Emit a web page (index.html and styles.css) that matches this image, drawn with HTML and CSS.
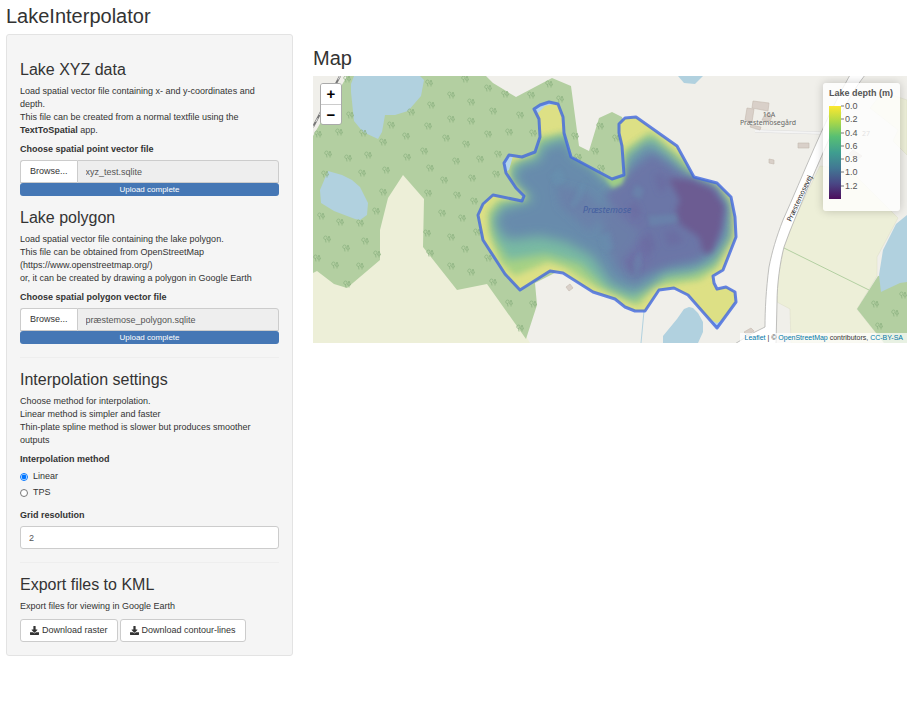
FILE: index.html
```html
<!DOCTYPE html>
<html lang="en">
<head>
<meta charset="utf-8">
<title>LakeInterpolator</title>
<link rel="stylesheet" href="styles.css">
</head>
<body>
<div class="container">
  <h2>LakeInterpolator</h2>
  <div class="row">
    <div class="col-side">
      <form class="well">
        <h3>Lake XYZ data</h3>
        <p>Load spatial vector file containing x- and y-coordinates and depth.<br>This file can be created from a normal textfile using the <b>TextToSpatial</b> app.</p>
        <label class="control-label" for="xyz">Choose spatial point vector file</label>
        <div class="input-group">
          <label class="btn btn-file">Browse...<input class="file" id="xyz" type="file"></label>
          <input class="form-control" type="text" value="xyz_test.sqlite" aria-label="Point file name" readonly>
        </div>
        <div class="progress">Upload complete</div>

        <h3>Lake polygon</h3>
        <p>Load spatial vector file containing the lake polygon.<br>This file can be obtained from OpenStreetMap (https://www.openstreetmap.org/)<br>or, it can be created by drawing a polygon in Google Earth</p>
        <label class="control-label" for="poly">Choose spatial polygon vector file</label>
        <div class="input-group">
          <label class="btn btn-file">Browse...<input class="file" id="poly" type="file"></label>
          <input class="form-control" type="text" value="præstemose_polygon.sqlite" aria-label="Polygon file name" readonly>
        </div>
        <div class="progress">Upload complete</div>
        <hr>

        <h3>Interpolation settings</h3>
        <p>Choose method for interpolation.<br>Linear method is simpler and faster<br>Thin-plate spline method is slower but produces smoother outputs</p>
        <fieldset>
          <legend class="control-label">Interpolation method</legend>
          <label class="radio"><input type="radio" name="method" checked>Linear</label>
          <label class="radio"><input type="radio" name="method">TPS</label>
        </fieldset>
        <label class="control-label" for="grid">Grid resolution</label>
        <input class="form-control" id="grid" type="text" inputmode="numeric" value="2">
        <hr>

        <h3>Export files to KML</h3>
        <p>Export files for viewing in Google Earth</p>
        <div class="buttons">
          <button class="btn" type="button"><svg class="icon" viewBox="0 0 512 512" aria-hidden="true"><path d="M216 0h80c13 0 24 11 24 24v168h88c18 0 27 21 14 34L270 378c-7 7-20 7-28 0L90 226c-13-13-4-34 14-34h88V24c0-13 11-24 24-24zm296 376v112c0 13-11 24-24 24H24c-13 0-24-11-24-24V376c0-13 11-24 24-24h147l49 49c20 20 52 20 72 0l49-49h147c13 0 24 11 24 24z"/></svg>Download raster</button>
          <button class="btn" type="button"><svg class="icon" viewBox="0 0 512 512" aria-hidden="true"><path d="M216 0h80c13 0 24 11 24 24v168h88c18 0 27 21 14 34L270 378c-7 7-20 7-28 0L90 226c-13-13-4-34 14-34h88V24c0-13 11-24 24-24zm296 376v112c0 13-11 24-24 24H24c-13 0-24-11-24-24V376c0-13 11-24 24-24h147l49 49c20 20 52 20 72 0l49-49h147c13 0 24 11 24 24z"/></svg>Download contour-lines</button>
        </div>
      </form>
    </div>

    <main class="col-main">
      <h2>Map</h2>
      <div class="map">
        <svg class="tiles" viewBox="313 76 594 267" preserveAspectRatio="xMidYMid slice" role="img" aria-label="Lake depth map of Præstemose">
          <defs>
            <g id="t" fill="none" stroke="#8db282" stroke-width="0.8">
              <path d="M-1 3.500L-1.500 0.500C-4 0.500-3.500-3-1.500-3S0.500 0-1.500 0.500M2 3.500V1L0.500 1L2-3L3.500 1H2"/>
            </g>
            <path id="shore" d="M534 109L540 105L549 102L558 104L563 117L564 133L571 157L612 179L624 175L622 146L619 133L619 124L625 118L636 117L677 146L694 177L717 183L731 197L735 217L736 237L723 270L713 276L714 283L717 289L726 287L735 292L736 302L717 328L688 295L674 288L659 290L645 311L635 311L625 307L615 299L593 292L563 273L550 271L520 290L505 274L483 240L478 215L483 204L493 195L522 201L524 196L516 188L506 173L504 163L509 155L522 157L535 152L540 137L539 119Z"/>
            <clipPath id="lake"><use href="#shore"/></clipPath>
            <filter id="b2" x="-20%" y="-20%" width="140%" height="140%"><feGaussianBlur stdDeviation="2"/></filter>
            <filter id="b3" x="-20%" y="-20%" width="140%" height="140%"><feGaussianBlur stdDeviation="3"/></filter>
            <filter id="b4" x="-20%" y="-20%" width="140%" height="140%"><feGaussianBlur stdDeviation="4"/></filter>
            <filter id="b6" x="-20%" y="-20%" width="140%" height="140%"><feGaussianBlur stdDeviation="6"/></filter>
          </defs>

          <rect x="213" y="-24" width="794" height="467" fill="#f0efea"/>

          <!-- fields -->
          <path fill="#edefd8" d="M313 260H370V170H430L530 343H313Z"/>
          <path fill="#edefd8" stroke="#dcdcc6" stroke-width="0.5" d="M820 166L850 170L880 200L898 218L877 257V276L857 309L884 343H791L790 309L777 302L778 277L784 247L794 220Z"/>
          <path fill="#edefd8" stroke="#dcdcc6" stroke-width="0.5" d="M883 92L907 100V155L893 141L898 130L870 108Z"/>

          <!-- woodland -->
          <path fill="#b3cfa1" d="M347 76H486L493 83L516 97L552 78L571 86L579 146L589 151L599 118L612 112L622 117L640 170L600 250L535 283L537 305L526 339L487 284L457 290L423 247L424 199L403 175L388 198L380 230V260L347 288L334 284L317 271L313 273V136Z"/>
          <path fill="#b3cfa1" d="M878 276L857 309L884 343H907V270Z"/>
          <path stroke="#b3cfa1" fill="none" d="M784 248L869 290"/>

          <!-- water -->
          <g fill="#b1d1df">
            <path d="M354 76L351 84V92L354 121L363 132L378 139L382 132L385 115H395L408 111L421 96L424 80L420 76Z"/>
            <path d="M328 171L320 190L321 203L334 211L355 219L360 220L367 215L368 203L360 187L352 180L342 175Z"/>
            <path d="M678 76L684 83L695 84L703 76Z"/>
            <path d="M689 307L684 309L677 319L663 336V343H698L703 332V322L698 313L693 308Z"/>
            <path d="M907 215L896 224L883 250L879 275L881 292L885 290L900 283L907 282Z"/>
          </g>
          <path d="M644 311L641 343" stroke="#b1d1df" fill="none"/>

          <g>
            <use href="#t" x="347" y="79"/><use href="#t" x="429" y="83"/><use href="#t" x="451" y="95"/><use href="#t" x="471" y="102"/><use href="#t" x="488" y="88"/><use href="#t" x="505" y="94"/><use href="#t" x="465" y="79"/><use href="#t" x="431" y="105"/><use href="#t" x="411" y="112"/><use href="#t" x="350" y="115"/><use href="#t" x="391" y="125"/><use href="#t" x="451" y="119"/><use href="#t" x="471" y="121"/><use href="#t" x="493" y="111"/><use href="#t" x="428" y="126"/><use href="#t" x="488" y="134"/><use href="#t" x="509" y="132"/><use href="#t" x="318" y="134"/><use href="#t" x="339" y="132"/><use href="#t" x="363" y="133"/><use href="#t" x="406" y="136"/><use href="#t" x="446" y="138"/><use href="#t" x="466" y="144"/><use href="#t" x="383" y="142"/><use href="#t" x="328" y="154"/><use href="#t" x="348" y="158"/><use href="#t" x="368" y="155"/><use href="#t" x="407" y="157"/><use href="#t" x="424" y="151"/><use href="#t" x="456" y="161"/><use href="#t" x="480" y="159"/><use href="#t" x="498" y="154"/><use href="#t" x="325" y="174"/><use href="#t" x="362" y="173"/><use href="#t" x="386" y="170"/><use href="#t" x="430" y="168"/><use href="#t" x="444" y="180"/><use href="#t" x="472" y="178"/><use href="#t" x="496" y="174"/><use href="#t" x="383" y="192"/><use href="#t" x="428" y="193"/><use href="#t" x="457" y="195"/>
            <use href="#t" x="474" y="201"/><use href="#t" x="442" y="213"/><use href="#t" x="462" y="218"/><use href="#t" x="477" y="232"/><use href="#t" x="427" y="233"/><use href="#t" x="451" y="237"/><use href="#t" x="465" y="249"/><use href="#t" x="488" y="258"/><use href="#t" x="430" y="253"/><use href="#t" x="451" y="266"/><use href="#t" x="471" y="272"/><use href="#t" x="493" y="282"/><use href="#t" x="509" y="303"/><use href="#t" x="321" y="216"/><use href="#t" x="340" y="222"/><use href="#t" x="360" y="223"/><use href="#t" x="376" y="211"/><use href="#t" x="327" y="239"/><use href="#t" x="346" y="248"/><use href="#t" x="365" y="241"/><use href="#t" x="317" y="258"/><use href="#t" x="335" y="265"/><use href="#t" x="360" y="266"/><use href="#t" x="377" y="254"/><use href="#t" x="347" y="284"/>
            <use href="#t" x="549" y="84"/><use href="#t" x="531" y="95"/><use href="#t" x="560" y="99"/><use href="#t" x="520" y="115"/><use href="#t" x="533" y="133"/><use href="#t" x="575" y="136"/><use href="#t" x="600" y="126"/><use href="#t" x="595" y="151"/><use href="#t" x="578" y="157"/><use href="#t" x="601" y="168"/><use href="#t" x="616" y="138"/><use href="#t" x="533" y="304"/><use href="#t" x="520" y="328"/>
            <use href="#t" x="875" y="304"/><use href="#t" x="895" y="313"/><use href="#t" x="879" y="326"/><use href="#t" x="903" y="295"/>
          </g>

          <!-- railway, track and roads -->
          <path d="M340 76L313 127" stroke="#777" stroke-width="2" fill="none"/>
          <path d="M340 76L313 127" stroke="#e6e6e6" stroke-dasharray="4 4" fill="none"/>
          <path d="M755 131L822 133" stroke="#dcdcdc" stroke-width="3" fill="none"/>
          <path d="M755 131L822 133" stroke="#f4f4f4" stroke-width="2" fill="none"/>
          <path fill="#fff" stroke="#b0b0ad" stroke-width="0.8" d="M850 75C825 118 802 178 783 220C776 238 772 252 769 267C766 290 765 310 765 327L753 333L733 345H776L777 302C777 285 780 262 784 247C791 227 800 207 809 185C829 140 842 105 865 75Z"/>

          <g fill="#d9d0c9" stroke="#c4b8ae" stroke-width="0.6">
            <path d="M753 101L769 103L768 111L752 108Z"/><path d="M747 108L754 109L752 122L745 120Z"/><path d="M765 114L772 117L770 121L762 120Z"/><path d="M751 125L761 127L760 130L750 127Z"/>
            <path d="M769 159L774 160V164L769 163Z"/><path d="M798 143H809V148H798Z"/><path d="M570 284L573 288L569 291L566 287Z"/><path d="M744 332L751 328L754 331L747 335Z"/><path d="M853 150L862 156L857 160L849 154Z"/>
          </g>

          <g class="place" text-anchor="middle">
            <text x="769" y="117">16A</text>
            <text x="768" y="125">Præstemosegård</text>
            <text x="866" y="136">27</text>
          </g>
          <text class="street" transform="translate(791 222) rotate(-65)">Præstemosevej</text>

          <!-- interpolated depth -->
          <g clip-path="url(#lake)">
            <rect x="470" y="95" width="275" height="240" fill="#dde085"/>
            <g filter="url(#b3)">
              <path fill="#a6d184" d="M538 138L566 132L572 154L612 182L626 175L624 150L650 132L682 158L694 176L716 186L729 202L731 238L716 268L700 280L670 284L655 286L638 306L618 296L594 286L564 267L548 262L515 276L500 262L489 232L488 212L498 200L526 202L526 195L512 180L510 164L522 159L536 155Z"/>
            </g>
            <g filter="url(#b4)">
              <path fill="#78b9a3" d="M540 143L566 136L574 154L604 180L628 178L626 156L652 137L690 175L714 186L729 204L730 236L714 264L692 274L664 278L650 286L634 300L604 286L580 264L546 254L508 260L496 240L492 217L504 203L530 203L528 192L511 178L512 166L536 157Z"/>
            </g>
            <g filter="url(#b6)">
              <path fill="#688bac" d="M542 148L566 140L572 154L596 170L612 188L622 184L628 160L648 143L668 156L684 172L716 186L729 205L729 235L714 258L696 268L664 272L650 284L634 292L612 284L592 256L566 242L540 236L508 240L496 226L500 210L534 200L514 180L518 166L540 160Z"/>
            </g>
            <g filter="url(#b4)" fill="#6e6fa6">
              <path d="M634 168L652 154L690 178L716 188L726 210L720 238L698 260L668 266L640 276L622 262L634 246L642 232L620 216L604 196Z" opacity=".75"/>
              <path d="M600 206L640 220L650 262L636 284L616 268L604 236Z" opacity=".5"/>
              <path d="M556 184L590 194L604 214L590 232L560 206Z" opacity=".35"/>
            </g>
            <g filter="url(#b3)">
              <path fill="#6c5b92" d="M668 178L690 180L712 189L724 206L721 228L712 252L704 254L699 237L680 224L676 210L680 200Z"/>
              <g fill="#6b5f9a" opacity=".35">
                <path d="M654 176L662 172L668 186L660 194Z"/><path d="M640 240L650 232L656 246L646 258Z"/><path d="M664 232L676 230L684 242L668 246Z"/><path d="M628 206L636 202L642 212L634 220Z"/><path d="M626 262L634 258L640 270L630 274Z"/>
              </g>
            </g>
            <g filter="url(#b2)" fill="#6797b2" opacity=".35">
              <path d="M570 206L580 186L586 180L582 198L574 208Z"/><path d="M648 216L676 214L678 222L650 226Z"/><path d="M550 176L560 168L566 180L556 186Z"/><path d="M636 184L644 190L640 200L632 194Z"/><path d="M600 238L610 230L614 248L606 252Z"/><path d="M632 264L640 250L642 266L636 276Z"/>
            </g>
            <path filter="url(#b2)" fill="#9fce86" d="M606 178L612 188L622 184L626 172L612 176Z"/>
            <path fill="#b5d5ea" d="M534 109L549 101L558 103L545 106L538 113ZM504 158L513 156L509 170L505 172ZM711 320L717 323L723 320L717 330Z"/>
          </g>
          <text class="water" x="607" y="213" text-anchor="middle">Præstemose</text>
          <use href="#shore" fill="none" stroke="#4067e0" stroke-opacity=".8" stroke-width="3" stroke-linejoin="round"/>
        </svg>

        <div class="zoom-control">
          <button type="button" aria-label="Zoom in">+</button>
          <button type="button" aria-label="Zoom out">−</button>
        </div>

        <div class="legend">
          <strong>Lake depth (m)</strong>
          <svg class="scale" width="40" height="100" viewBox="0 0 40 100">
            <defs><linearGradient id="v" x1="0" y1="0" x2="0" y2="1">
              <stop offset="0" stop-color="#fde725"/><stop offset=".17" stop-color="#a6d63f"/><stop offset=".33" stop-color="#4fbc6c"/><stop offset=".5" stop-color="#35998a"/><stop offset=".67" stop-color="#38708e"/><stop offset=".83" stop-color="#403f80"/><stop offset="1" stop-color="#440154"/>
            </linearGradient></defs>
            <rect y="4" width="12" height="93" fill="url(#v)" opacity=".95"/>
            <path d="M12 4H15M12 17H15M12 31H15M12 44H15M12 57H15M12 70H15M12 84H15" stroke="#777" stroke-width="1"/>
            <text x="16" y="7">0.0</text><text x="16" y="20">0.2</text><text x="16" y="34">0.4</text><text x="16" y="47">0.6</text><text x="16" y="60">0.8</text><text x="16" y="73">1.0</text><text x="16" y="87">1.2</text>
          </svg>
        </div>

        <div class="attribution"><a href="#">Leaflet</a> | © <a href="#">OpenStreetMap</a> contributors, <a href="#">CC-BY-SA</a></div>
      </div>
    </main>
  </div>
</div>
</body>
</html>
```
FILE: styles.css
```css
* { box-sizing: border-box; }

body {
  margin: 0;
  background: #fff;
  color: #333;
  font: 9px/13px "Liberation Sans", Arial, sans-serif;
}

.container { padding: 5px 6px; overflow: hidden; }

.row { display: flex; align-items: flex-start; margin: 0 -10px; }
.col-side { width: 33.3333%; padding: 0 10px; }
.col-main { width: 66.6667%; padding: 13px 10px 0; }

h2, h3 { font-weight: 500; }
h2 { margin: 0 0 7px; font-size: 20px; line-height: 22px; }
h3 { margin: 13px 0 6px; font-size: 16px; line-height: 18px; }
p { margin: 0 0 6px; }

hr { height: 1px; margin: 13px 0; border: 0; background: #eee; }

.well {
  display: flow-root;
  padding: 13px;
  border: 1px solid #e3e3e3;
  border-radius: 3px;
  background: #f5f5f5;
}

.control-label {
  display: block;
  margin-bottom: 4px;
  padding: 0;
  font-weight: bold;
}

.input-group { display: flex; }

.btn {
  display: inline-flex;
  align-items: center;
  height: 23px;
  padding: 0 9px;
  border: 1px solid #ccc;
  border-radius: 3px;
  background: #fff;
  color: #333;
  font: inherit;
}

.btn-file { border-right: 0; border-radius: 3px 0 0 0; }
.file { position: absolute; width: 1px; height: 1px; opacity: 0; }

.form-control {
  display: block;
  width: 100%;
  height: 23px;
  padding: 0 8px;
  border: 1px solid #ccc;
  border-radius: 3px;
  background: #fff;
  color: #555;
  font: inherit;
}
.input-group .form-control {
  flex: 1;
  min-width: 0;
  border-radius: 0 3px 0 0;
  background: #eee;
}

.progress {
  height: 13px;
  border-radius: 3px;
  background: #4577b5;
  color: #fff;
  font-size: 8px;
  text-align: center;
}

fieldset { margin: 0 0 10px; padding: 0; border: 0; }
.radio { display: flex; align-items: center; gap: 5px; }
.radio + .radio { margin-top: 3px; }
.radio input { width: 8px; height: 8px; margin: 0; }

.buttons { display: flex; gap: 2px; }
.icon { width: 9px; height: 9px; margin-right: 3px; fill: #333; }

.map { position: relative; height: 267px; overflow: hidden; background: #ddd; }
.tiles { display: block; width: 100%; height: 100%; }
.place { fill: #666; font: 7px "Noto Sans", sans-serif; }
.street { fill: #222; font: 7px "Noto Sans", sans-serif; }
.water { fill: #4560a0; font: italic 9px "Noto Sans", sans-serif; }

.zoom-control {
  position: absolute;
  top: 7px;
  left: 7px;
  border: 1px solid #aaa;
  border-radius: 3px;
  overflow: hidden;
}
.zoom-control button {
  display: block;
  width: 20px;
  height: 20px;
  padding: 0;
  border: 0;
  background: #fff;
  color: #000;
  font: bold 15px/20px "Liberation Sans", Arial, sans-serif;
}
.zoom-control button + button { border-top: 1px solid #ccc; line-height: 18px; }

.legend {
  position: absolute;
  top: 7px;
  right: 7px;
  width: 77px;
  height: 128px;
  padding: 4px 6px;
  border-radius: 3px;
  background: rgba(255, 255, 255, .8);
  box-shadow: 0 0 10px rgba(0, 0, 0, .2);
  color: #555;
  white-space: nowrap;
}
.legend strong { display: block; }
.scale { display: block; margin-top: 2px; fill: #555; }

.attribution {
  position: absolute;
  right: 0;
  bottom: 0;
  padding: 0 4px;
  background: rgba(255, 255, 255, .7);
  font-size: 7px;
  line-height: 10px;
}
.attribution a { color: #0078a8; text-decoration: none; }
```
